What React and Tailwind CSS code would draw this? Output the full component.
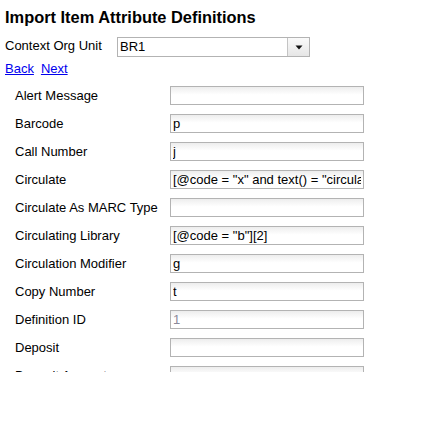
import React from 'react';

const fields = [
  { label: 'Alert Message', value: '' },
  { label: 'Barcode', value: 'p' },
  { label: 'Call Number', value: 'j' },
  { label: 'Circulate', value: '[@code = "x" and text() = "circulate"]' },
  { label: 'Circulate As MARC Type', value: '' },
  { label: 'Circulating Library', value: '[@code = "b"][2]' },
  { label: 'Circulation Modifier', value: 'g' },
  { label: 'Copy Number', value: 't' },
  { label: 'Definition ID', value: '1', disabled: true },
  { label: 'Deposit', value: '' },
  { label: 'Deposit Amount', value: '' },
];

const FieldRow = ({ field }) => (
  <div className="flex items-center h-[28px] pl-[10px]">
    <span className="w-[155px] shrink-0 text-[13px] leading-[15px] text-black">{field.label}</span>
    <input
      readOnly
      value={field.value}
      className={
        "w-[194px] h-[19px] border border-[#b3b3b3] bg-linear-to-b from-[#ededed] to-white to-[45%] px-[2px] text-[13px] leading-[17px] outline-none " +
        (field.disabled ? "text-[#8a8a9a]" : "text-black")
      }
    />
  </div>
);

export default function App() {
  return (
    <div className="w-[447px] h-[432px] bg-white px-[5px] font-['Liberation_Sans',Arial,sans-serif] text-black overflow-hidden">
      <h1 className="mt-[8px] text-[16.4px] leading-[18px] font-bold">Import Item Attribute Definitions</h1>

      <div className="flex items-start mt-[11px]">
        <span className="w-[112px] shrink-0 pt-[1px] text-[13px] leading-[15px]">Context Org Unit</span>
        <div className="flex w-[193px] h-[20px] border border-[#b3b3b3] bg-white">
          <span className="flex-1 pl-[2px] text-[13px] leading-[18px]">BR1</span>
          <span className="w-[22px] flex items-center justify-center border-l border-[#c4c4c4] bg-linear-to-b from-[#fafafa] to-[#e6e6e6]">
            <svg width="8" height="5" viewBox="0 0 8 5">
              <path d="M0.5 0.5 L7.5 0.5 L4 4.5 Z" fill="#111" />
            </svg>
          </span>
        </div>
      </div>

      <div className="flex gap-[7px] mt-[4px] text-[13px] leading-[15px]">
        <a href="#" className="text-[#0000ee] underline">Back</a>
        <a href="#" className="text-[#0000ee] underline">Next</a>
      </div>

      {/* scrolling field pane, clipped like the original */}
      <div className="h-[296px] pt-[5px] overflow-hidden">
        {fields.map((f) => (
          <FieldRow key={f.label} field={f} />
        ))}
      </div>
    </div>
  );
}
